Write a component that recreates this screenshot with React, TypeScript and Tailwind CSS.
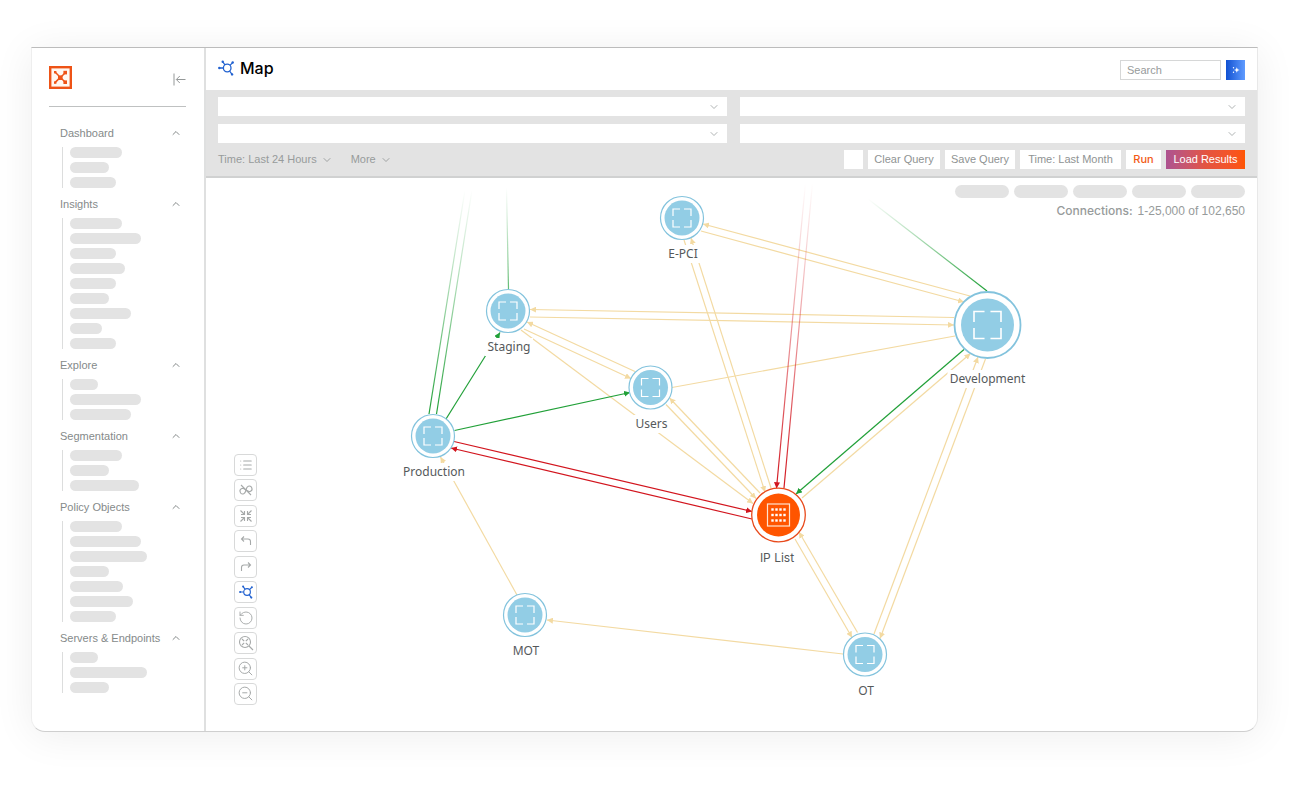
import type { ReactNode } from 'react';
import { ChevronDown, ChevronUp, List, RotateCcw, ZoomIn, ZoomOut } from 'lucide-react';

interface NavSection {
  title: string;
  items: string[];
}

// each item is the width of its placeholder bar
const NAV: NavSection[] = [
  { title: 'Dashboard', items: ['w-[52px]', 'w-[39px]', 'w-[46px]'] },
  {
    title: 'Insights',
    items: ['w-[52px]', 'w-[71px]', 'w-[46px]', 'w-[55px]', 'w-[46px]', 'w-[39px]', 'w-[61px]', 'w-[32px]', 'w-[46px]'],
  },
  { title: 'Explore', items: ['w-[28px]', 'w-[71px]', 'w-[61px]'] },
  { title: 'Segmentation', items: ['w-[52px]', 'w-[39px]', 'w-[69px]'] },
  {
    title: 'Policy Objects',
    items: ['w-[52px]', 'w-[71px]', 'w-[77px]', 'w-[39px]', 'w-[53px]', 'w-[63px]', 'w-[46px]'],
  },
  { title: 'Servers & Endpoints', items: ['w-[28px]', 'w-[77px]', 'w-[39px]'] },
];

type EdgeColor = 'amber' | 'green' | 'red';

interface Edge {
  from: [number, number];
  to: [number, number];
  color: EdgeColor;
  arrow?: boolean;
  fade?: number; // opacity at the node end
}

const EDGE_COLORS: Record<EdgeColor, string> = {
  amber: '#f3daa2',
  green: '#21a038',
  red: '#d2151e',
};

const EDGES: Edge[] = [
  { from: [970, 296], to: [703, 224], color: 'amber', arrow: true },
  { from: [701, 231], to: [964, 302], color: 'amber', arrow: true },
  { from: [684, 240], to: [765, 492], color: 'amber', arrow: true },
  { from: [771, 488], to: [691, 238], color: 'amber', arrow: true },
  { from: [954, 317.5], to: [530, 309.5], color: 'amber', arrow: true },
  { from: [530, 317], to: [954, 325], color: 'amber', arrow: true },
  { from: [635, 371.5], to: [527, 322], color: 'amber', arrow: true },
  { from: [524, 329], to: [631, 378.5], color: 'amber', arrow: true },
  { from: [521, 330], to: [753, 503.5], color: 'amber', arrow: true },
  { from: [760, 493], to: [669.5, 398], color: 'amber', arrow: true },
  { from: [666, 404.5], to: [756, 498.5], color: 'amber', arrow: true },
  { from: [672, 387.5], to: [955, 336], color: 'amber' },
  { from: [802, 498], to: [970.5, 353.5], color: 'amber', arrow: true },
  { from: [795, 539], to: [852, 637.5], color: 'amber', arrow: true },
  { from: [857.5, 632.5], to: [799, 532], color: 'amber', arrow: true },
  { from: [874, 634], to: [978, 357], color: 'amber', arrow: true },
  { from: [985.5, 359], to: [880, 638.5], color: 'amber', arrow: true },
  { from: [517, 595], to: [440.5, 457], color: 'amber', arrow: true },
  { from: [843, 654], to: [547, 620], color: 'amber', arrow: true },
  { from: [446, 419], to: [500, 332.5], color: 'green', arrow: true },
  { from: [454.5, 430.5], to: [630, 392.5], color: 'green', arrow: true },
  { from: [964, 349.5], to: [796, 494], color: 'green', arrow: true },
  { from: [429, 414], to: [465, 190], color: 'green', fade: 1 },
  { from: [436.5, 414], to: [472, 190], color: 'green', fade: 1 },
  { from: [508.5, 289], to: [506.5, 188], color: 'green', fade: 0.7 },
  { from: [987, 291], to: [868, 199], color: 'green', fade: 1 },
  { from: [454, 441.5], to: [752, 511.5], color: 'red', arrow: true },
  { from: [752, 519], to: [451, 448], color: 'red', arrow: true },
  { from: [776.5, 488], to: [805.5, 183], color: 'red', fade: 1 },
  { from: [784, 488], to: [812.5, 183], color: 'red', fade: 1 },
];

interface MapNode {
  label: string;
  x: number;
  y: number;
  r: number;
  inner: number;
  labelX: number;
  labelY: number;
  labelWidth: number;
}

const NODES: MapNode[] = [
  { label: 'E-PCI', x: 682, y: 218, r: 21.5, inner: 17.5, labelX: 683, labelY: 258, labelWidth: 36 },
  { label: 'Staging', x: 508, y: 311, r: 21.5, inner: 17.5, labelX: 509, labelY: 351, labelWidth: 48 },
  { label: 'Users', x: 650.5, y: 387.5, r: 21.5, inner: 17.5, labelX: 651.5, labelY: 428, labelWidth: 36 },
  { label: 'Production', x: 433, y: 436, r: 21.5, inner: 17.5, labelX: 434, labelY: 476, labelWidth: 66 },
  { label: 'Development', x: 987.5, y: 325, r: 33, inner: 26.5, labelX: 987.5, labelY: 383, labelWidth: 80 },
  { label: 'MOT', x: 525, y: 615, r: 21.5, inner: 17.5, labelX: 526, labelY: 655, labelWidth: 30 },
  { label: 'OT', x: 865, y: 654.5, r: 21.5, inner: 17.5, labelX: 866, labelY: 695, labelWidth: 20 },
];

function MapIcon({ className }: { className?: string }) {
  return (
    <svg viewBox="0 0 16 16" className={className} fill="none" stroke="currentColor" strokeWidth="1.3">
      <circle cx="9.2" cy="8" r="3.8" />
      <path d="M1 8h4.4M7 5 4.8 1.8M12 5.4 14.6 2.6M11.6 11 14 14.4" />
      <g fill="currentColor" stroke="none">
        <circle cx="1.3" cy="8" r="1.2" />
        <circle cx="4.7" cy="1.7" r="1.2" />
        <circle cx="14.7" cy="2.5" r="1.2" />
        <circle cx="14.1" cy="14.4" r="1.2" />
      </g>
    </svg>
  );
}

function Logo() {
  return (
    <svg viewBox="0 0 23 23" className="size-[23px]" role="img" aria-label="Home">
      <rect x="1.2" y="1.2" width="20.6" height="20.6" fill="#fff7f0" stroke="#ee5316" strokeWidth="2.4" />
      <g fill="#ee5316">
        <rect x="9" y="9.4" width="4.6" height="4.6" />
        <rect x="14.4" y="4.8" width="3.6" height="3.6" />
        <rect x="14.4" y="14.4" width="3.6" height="3.6" />
        <rect x="5" y="5" width="2.4" height="2.4" />
        <rect x="5" y="15.4" width="2.4" height="2.4" />
      </g>
      <path d="m6 6 4 4M6 16.6l4-4M16 7l-4 4M16 16l-4-4" stroke="#ee5316" strokeWidth="1.5" />
    </svg>
  );
}

function ToolIcon({ children }: { children: ReactNode }) {
  return (
    <svg viewBox="0 0 16 16" className="size-4" fill="none" stroke="currentColor" strokeWidth="1.1">
      {children}
    </svg>
  );
}

const TOOLS: { label: string; icon: ReactNode; active?: boolean }[] = [
  { label: 'Legend', icon: <List className="size-[14px]" strokeWidth={1.8} /> },
  {
    label: 'Hide links',
    icon: (
      <ToolIcon>
        <path
          d="M8 8C6.8 6.2 5.8 5.2 4.600 5.200a2.800 2.800 0 0 0 0 5.600C5.800 10.800 6.800 9.800 8 8s2.200-2.800 3.400-2.800a2.800 2.800 0 0 1 0 5.600C10.200 10.800 9.200 9.800 8 8"
          transform="rotate(-20 8 8)"
        />
        <path d="m3 3 10 10" />
      </ToolIcon>
    ),
  },
  {
    label: 'Collapse',
    icon: (
      <ToolIcon>
        <path d="m2.500 2.500 4 4M6.500 3v3.500H3M13.500 2.500l-4 4M9.500 3v3.500H13M2.500 13.500l4-4M6.500 13V9.500H3M13.500 13.500l-4-4M9.500 13V9.500H13" />
      </ToolIcon>
    ),
  },
  {
    label: 'Undo',
    icon: (
      <ToolIcon>
        <path d="M6 3.500 3.500 6 6 8.500M3.500 6H10a2.500 2.500 0 0 1 2.500 2.500V12" />
      </ToolIcon>
    ),
  },
  {
    label: 'Redo',
    icon: (
      <ToolIcon>
        <path d="M10 3.500 12.500 6 10 8.500M12.500 6H6a2.500 2.500 0 0 0-2.500 2.500V12" />
      </ToolIcon>
    ),
  },
  { label: 'Map layout', icon: <MapIcon className="size-[14px]" />, active: true },
  { label: 'Reset', icon: <RotateCcw className="size-4" strokeWidth={1.4} /> },
  {
    label: 'Zoom to fit',
    icon: (
      <ToolIcon>
        <circle cx="7" cy="7" r="5.500" />
        <path d="m11 11 4 4M4 4l2.200 2.200M10 4 7.800 6.200M4 10l2.200-2.200M10 10 7.800 7.800" />
      </ToolIcon>
    ),
  },
  { label: 'Zoom in', icon: <ZoomIn className="size-[17px]" strokeWidth={1.4} /> },
  { label: 'Zoom out', icon: <ZoomOut className="size-[17px]" strokeWidth={1.4} /> },
];

function Sidebar() {
  return (
    <aside className="w-[174px] shrink-0 border-r-2 border-[#dfe0e0] pt-[18px] pr-[18px] pb-8 pl-[17px]">
      <div className="flex h-[41px] items-start justify-between border-b border-[#bfc1c1]">
        <Logo />
        <button aria-label="Collapse sidebar" className="mt-[7px] text-[#949898]">
          <svg viewBox="0 0 13 13" className="size-[13px]" fill="none" stroke="currentColor">
            <path d="M1 .5v12M12.500 6.500h-9M6.800 3 3.300 6.500 6.800 10" />
          </svg>
        </button>
      </div>
      <nav className="mt-4 pl-[11px]">
        {NAV.map((section) => (
          <div key={section.title} className="mb-[6px]">
            <button className="flex h-5 w-full items-center justify-between pr-1 text-[11px] text-[#858a8a]">
              {section.title}
              <ChevronUp className="size-3" strokeWidth={2} />
            </button>
            <ul className="mt-1 ml-[2px] flex flex-col gap-1 border-l border-[#dcdddd] pl-[7px]">
              {section.items.map((width, i) => (
                <li key={i} className={`h-[11px] rounded-full bg-[#e3e3e3] ${width}`} />
              ))}
            </ul>
          </div>
        ))}
      </nav>
    </aside>
  );
}

function FilterSelect({ label }: { label: string }) {
  return (
    <div className="relative h-[19px]">
      <select aria-label={label} className="block h-full w-full appearance-none bg-white" />
      <ChevronDown className="pointer-events-none absolute top-1 right-[7px] size-3 text-[#a6aaaa]" strokeWidth={1.8} />
    </div>
  );
}

function Filters() {
  return (
    <section className="border-b-2 border-[#d0d1d1] bg-[#e3e3e3] px-3 py-[7px] text-[11px]">
      <div className="grid grid-cols-[509fr_505fr] gap-x-[13px] gap-y-2">
        <FilterSelect label="Source" />
        <FilterSelect label="Destination" />
        <FilterSelect label="Source exclusions" />
        <FilterSelect label="Destination exclusions" />
      </div>
      <div className="mt-[7px] flex items-center justify-between">
        <div className="flex gap-[18px] text-[#979b9b]">
          <button className="flex items-center gap-1">
            Time: Last 24 Hours
            <ChevronDown className="size-3" strokeWidth={1.8} />
          </button>
          <button className="flex items-center gap-1">
            More
            <ChevronDown className="size-3" strokeWidth={1.8} />
          </button>
        </div>
        <div className="flex h-[19px] gap-[5px] whitespace-nowrap text-[#8f9393]">
          <button aria-label="Options" className="w-[19px] bg-white" />
          <button className="w-[72px] bg-white">Clear Query</button>
          <button className="w-[70px] bg-white">Save Query</button>
          <button className="w-[101px] bg-white">Time: Last Month</button>
          <button className="w-[35px] bg-white font-[Inter,sans-serif] font-medium text-[#f25a14]">Run</button>
          <button className="w-[79px] bg-linear-to-r from-[#ad5290] via-[#e35440] to-[#ff5500] text-white">
            Load Results
          </button>
        </div>
      </div>
    </section>
  );
}

// four corner marks around the node centre
function Brackets({ x, y, size }: { x: number; y: number; size: number }) {
  const s = size / 2;
  const leg = size * 0.39;
  return (
    <path
      d={`M${x - s} ${y - s + leg}v${-leg}h${leg}M${x + s - leg} ${y - s}h${leg}v${leg}M${x + s} ${y + s - leg}v${leg}h${-leg}M${x - s + leg} ${y + s}h${-leg}v${-leg}`}
      fill="none"
      stroke="#fff"
      strokeWidth={size > 20 ? 1.6 : 1.2}
    />
  );
}

function TrafficMap() {
  return (
    <svg viewBox="206 178 1051 552" className="block h-auto w-full">
      <defs>
        {(Object.keys(EDGE_COLORS) as EdgeColor[]).map((color) => (
          <marker
            key={color}
            id={`arrow-${color}`}
            markerUnits="userSpaceOnUse"
            markerWidth="7"
            markerHeight="6"
            refX="6"
            refY="3"
            orient="auto"
          >
            <path d="M0 0 6 3 0 6z" fill={EDGE_COLORS[color]} />
          </marker>
        ))}
        {EDGES.map((e, i) =>
          e.fade ? (
            <linearGradient
              key={i}
              id={`fade-${i}`}
              gradientUnits="userSpaceOnUse"
              x1={e.from[0]}
              y1={e.from[1]}
              x2={e.to[0]}
              y2={e.to[1]}
            >
              <stop offset="0" stopColor={EDGE_COLORS[e.color]} stopOpacity={e.fade} />
              <stop offset="0.45" stopColor={EDGE_COLORS[e.color]} stopOpacity={e.fade * 0.5} />
              <stop offset="0.75" stopColor={EDGE_COLORS[e.color]} stopOpacity={e.fade * 0.22} />
              <stop offset="1" stopColor={EDGE_COLORS[e.color]} stopOpacity="0" />
            </linearGradient>
          ) : null
        )}
      </defs>

      {EDGES.map((e, i) => (
        <line
          key={i}
          x1={e.from[0]}
          y1={e.from[1]}
          x2={e.to[0]}
          y2={e.to[1]}
          stroke={e.fade ? `url(#fade-${i})` : EDGE_COLORS[e.color]}
          strokeWidth="1.2"
          markerEnd={e.arrow ? `url(#arrow-${e.color})` : undefined}
        />
      ))}
      <path d="M776.500 488.500 774 482l6 .6z" fill={EDGE_COLORS.red} />

      {NODES.map((n) => (
        <g key={n.label}>
          <rect x={n.labelX - n.labelWidth / 2} y={n.labelY - 13} width={n.labelWidth} height="18" fill="#fff" />
          <circle cx={n.x} cy={n.y} r={n.r} fill="#fff" stroke="#83c3dd" strokeWidth={n.r > 30 ? 1.8 : 1.2} />
          <circle cx={n.x} cy={n.y} r={n.inner} fill="#92cde5" />
          <Brackets x={n.x} y={n.y} size={n.r > 30 ? 27 : 18} />
          <text
            x={n.labelX}
            y={n.labelY}
            textAnchor="middle"
            className="fill-[#55595b] font-[Noto_Sans,sans-serif] text-[12px]"
          >
            {n.label}
          </text>
        </g>
      ))}

      <g>
        <circle cx="778.500" cy="515" r="26.800" fill="#fff" stroke="#e84a1c" strokeWidth="1.300" />
        <circle cx="778.500" cy="515" r="21.500" fill="#ff5500" />
        <rect x="767.500" y="504" width="22" height="22" fill="none" stroke="#ffe3cf" strokeWidth="1.200" />
        {[-5.5, 0, 5.5].map((dy) =>
          [-6, -2, 2, 6].map((dx) => (
            <rect key={`${dx}${dy}`} x={777.3 + dx} y={513.8 + dy} width="2.400" height="2.400" fill="#fff" />
          ))
        )}
        <text x="777" y="562" textAnchor="middle" className="fill-[#55595b] font-[Inter,sans-serif] text-[12px]">
          IP List
        </text>
      </g>
    </svg>
  );
}

export default function App() {
  return (
    <div className="bg-white pt-[47px] pr-[38px] pb-[69px] pl-[31px] font-[Liberation_Sans,Arial,sans-serif]">
      <div className="flex overflow-hidden rounded-b-[14px] border border-t-[#bcbcbc] border-r-[#e8e8e8] border-b-[#cfcfcf] border-l-[#eeeeee] bg-white shadow-[0_4px_40px_rgba(0,0,0,0.07)]">
        <Sidebar />
        <main className="min-w-0 flex-1">
          <header className="flex h-[42px] items-start justify-between px-3 pt-3">
            <h1 className="flex items-center gap-[6px] font-[Inter,sans-serif] text-base leading-4 font-medium text-black">
              <MapIcon className="size-4 text-[#2262d0]" />
              Map
            </h1>
            <div className="flex gap-[5px]">
              <input
                type="search"
                aria-label="Search"
                placeholder="Search"
                className="h-5 w-[101px] border border-[#d6d7d7] px-[6px] text-[11px] outline-none placeholder:text-[#979b9b]"
              />
              <button
                aria-label="Ask assistant"
                className="flex h-5 w-[19px] items-center justify-center bg-linear-to-r from-[#0f50d2] to-[#5f9bff]"
              >
                <svg viewBox="0 0 8 8" className="size-2" fill="#fff">
                  <path d="M4.800 1.200 5.600 3.200 7.600 4l-2 .8-.8 2-.8-2L2 4l2-.8z" />
                  <circle cx="1.500" cy="1.800" r=".7" />
                  <circle cx="1.500" cy="6.200" r=".7" />
                </svg>
              </button>
            </div>
          </header>
          <Filters />
          <div className="relative">
            <TrafficMap />
            <div className="absolute top-[7px] right-3 flex flex-col items-end gap-[5px]">
              <div className="flex gap-[5px]">
                {[0, 1, 2, 3, 4].map((i) => (
                  <span key={i} className="h-[13px] w-[54px] rounded-full bg-[#e3e3e3]" />
                ))}
              </div>
              <p className="flex gap-[5px] text-[12px] leading-4 text-[#979b9b]">
                <span className="font-[Inter,sans-serif] font-medium">Connections:</span>
                <span>1-25,000 of 102,650</span>
              </p>
            </div>
            <div className="absolute bottom-[25px] left-7 flex h-[251px] flex-col justify-between">
              {TOOLS.map((tool) => (
                <button
                  key={tool.label}
                  aria-label={tool.label}
                  className={`flex h-[22px] w-[23px] items-center justify-center rounded border border-[#d8d9d9] bg-white ${
                    tool.active ? 'text-[#2262d0]' : 'text-[#a6a9a9]'
                  }`}
                >
                  {tool.icon}
                </button>
              ))}
            </div>
          </div>
        </main>
      </div>
    </div>
  );
}
